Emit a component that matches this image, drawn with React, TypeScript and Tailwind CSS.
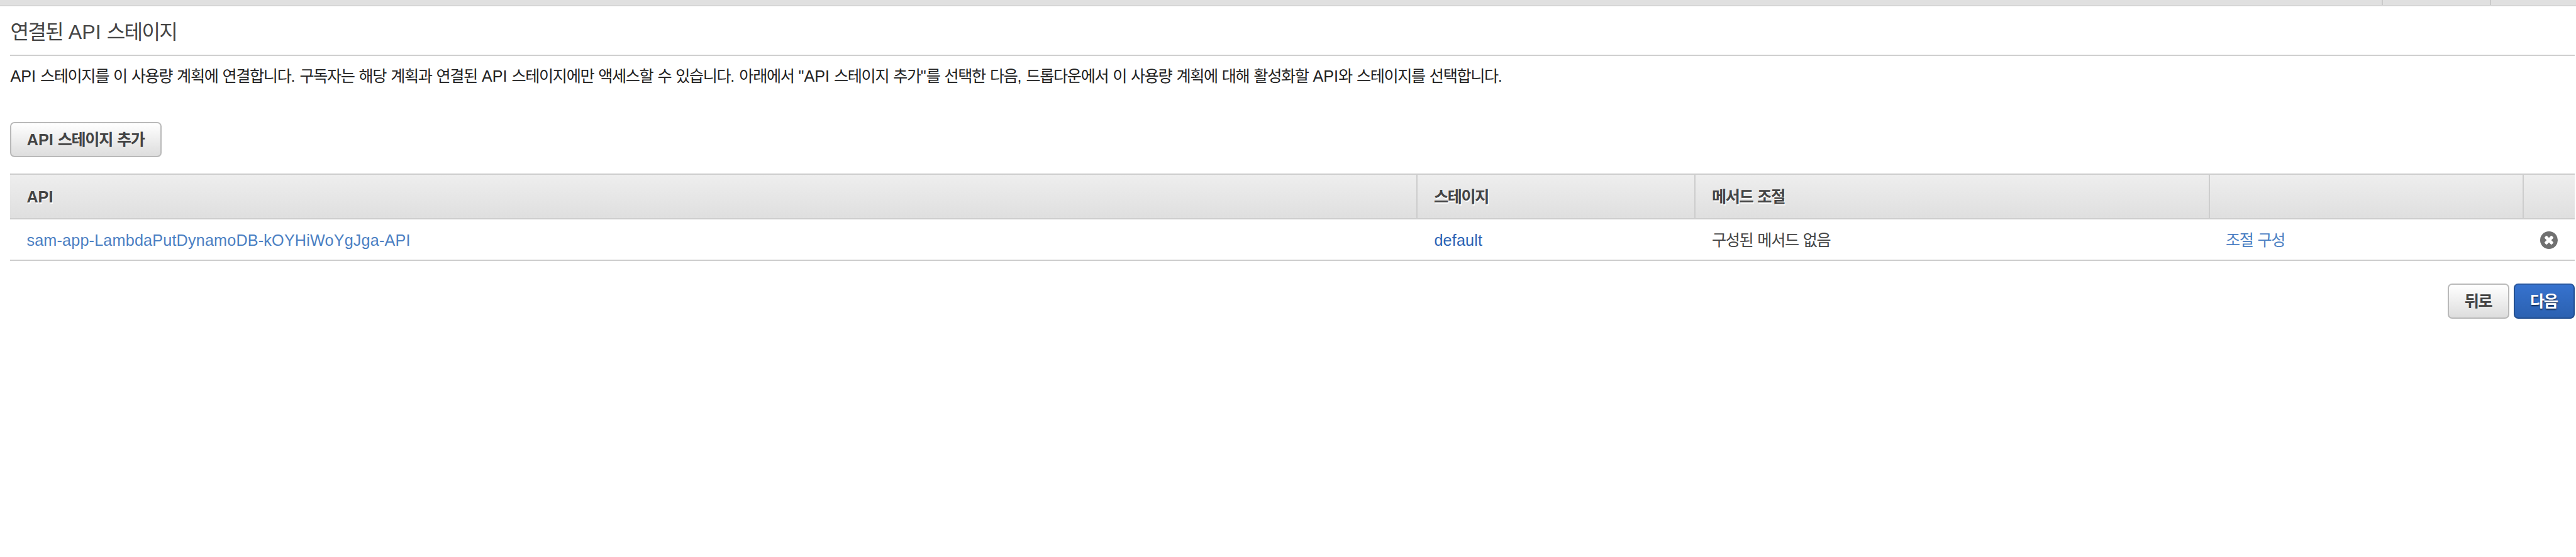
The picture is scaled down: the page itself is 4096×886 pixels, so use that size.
import React, { Fragment, type ReactNode } from "react";

const HANGUL = /([\uac00-\ud7a3]+)/;

/** Sets Hangul runs slightly tighter than the Latin text around them. */
function Ko({ text }: { text: string }) {
  return (
    <>
      {text.split(HANGUL).map((part, i) =>
        i % 2 === 1 ? (
          <span key={i} className="tracking-[-0.055em]">
            {part}
          </span>
        ) : (
          <Fragment key={i}>{part}</Fragment>
        ),
      )}
    </>
  );
}

function Button({ primary = false, children }: { primary?: boolean; children: ReactNode }) {
  const look = primary
    ? "border-[#224f91] border-t-[#2a59a3] bg-linear-to-b from-[#3672ce] to-[#2b61b1] text-white [text-shadow:0_2px_2px_rgba(0,0,0,0.55)]"
    : "border-[#b9b9b9] bg-linear-to-b from-white to-[#dddddd] text-[#444444]";
  return (
    <button
      type="button"
      className={`flex h-14 items-center rounded-[7px] border-2 pr-[25.4px] pl-[24.4px] font-bold whitespace-nowrap ${look}`}
    >
      <span className="leading-7">{children}</span>
    </button>
  );
}

const COLS = "grid grid-cols-[2235.6px_442px_818px_499px_1fr]";

function HeadCell({ first = false, text = "" }: { first?: boolean; text?: string }) {
  return (
    <div
      className={`flex items-center font-bold text-[#444444] [text-shadow:1px_2px_0_#ffffff] ${
        first ? "pl-[26px]" : "border-l-2 border-[#cdcdcd] pl-[26px]"
      }`}
    >
      <span>
        <Ko text={text} />
      </span>
    </div>
  );
}

function RemoveIcon() {
  return (
    <svg viewBox="0 0 28 28" className="size-7">
      <circle cx="14" cy="14" r="14" fill="#707070" />
      <g fill="#ffffff">
        <rect x="6" y="11.5" width="16" height="5" rx="1.1" transform="rotate(45 14 14)" />
        <rect x="6" y="11.5" width="16" height="5" rx="1.1" transform="rotate(-45 14 14)" />
      </g>
    </svg>
  );
}

export default function App() {
  return (
    <div className="h-[886px] w-[4096px] overflow-hidden bg-white font-['Liberation_Sans','Noto_Sans_CJK_KR',sans-serif] text-[25.2px] leading-7 text-[#444444]">
      <div className="flex h-[10px] justify-end border-b-2 border-[#d6d6d6] bg-[#e0e0e0]">
        <div className="w-[172px] border-l-2 border-[#cacaca]" />
        <div className="w-[137px] border-l-2 border-[#cacaca]" />
      </div>

      <main className="pr-[2px] pl-[16.4px]">
        <h2 className="flex h-[79px] items-center border-b-2 border-[#cfcfcf] pt-[5px] text-[32.2px] leading-10">
          <span>
            <Ko text="연결된 API 스테이지" />
          </span>
        </h2>

        <p className="mt-[18px] h-7 whitespace-nowrap text-[#222222]">
          <Ko
            text={
              'API 스테이지를 이 사용량 계획에 연결합니다. 구독자는 해당 계획과 연결된 API 스테이지에만 액세스할 수 있습니다. 아래에서 "API 스테이지 추가"를 선택한 다음, 드롭다운에서 이 사용량 계획에 대해 활성화할 API와 스테이지를 선택합니다.'
            }
          />
        </p>

        <div className="mt-[59px] flex">
          <Button>
            <Ko text="API 스테이지 추가" />
          </Button>
        </div>

        <section className="mt-[26px]">
          <div
            className={`${COLS} h-[73px] border-y-2 border-[#cdcdcd] bg-linear-to-b from-[#eeeeee] to-[#dfdfdf]`}
          >
            <HeadCell first text="API" />
            <HeadCell text="스테이지" />
            <HeadCell text="메서드 조절" />
            <HeadCell />
            <HeadCell />
          </div>
          <div className={`${COLS} h-[66px] items-center border-b-2 border-[#cdcdcd] pt-px`}>
            <a className="pl-[26px] tracking-[0.007em] text-[#4b80c3]">
              sam-app-LambdaPutDynamoDB-kOYHiWoYgJga-API
            </a>
            <a className="pl-[28.4px] tracking-[0.007em] text-[#2a63b5]">default</a>
            <span className="pl-[28px]">
              <Ko text="구성된 메서드 없음" />
            </span>
            <a className="pl-[27px] text-[#4b80c3]">
              <Ko text="조절 구성" />
            </a>
            <span className="flex pt-px pl-[28.2px]">
              <RemoveIcon />
            </span>
          </div>
        </section>

        <div className="mt-9 flex justify-end gap-[7px]">
          <Button>
            <Ko text="뒤로" />
          </Button>
          <Button primary>
            <Ko text="다음" />
          </Button>
        </div>
      </main>
    </div>
  );
}
